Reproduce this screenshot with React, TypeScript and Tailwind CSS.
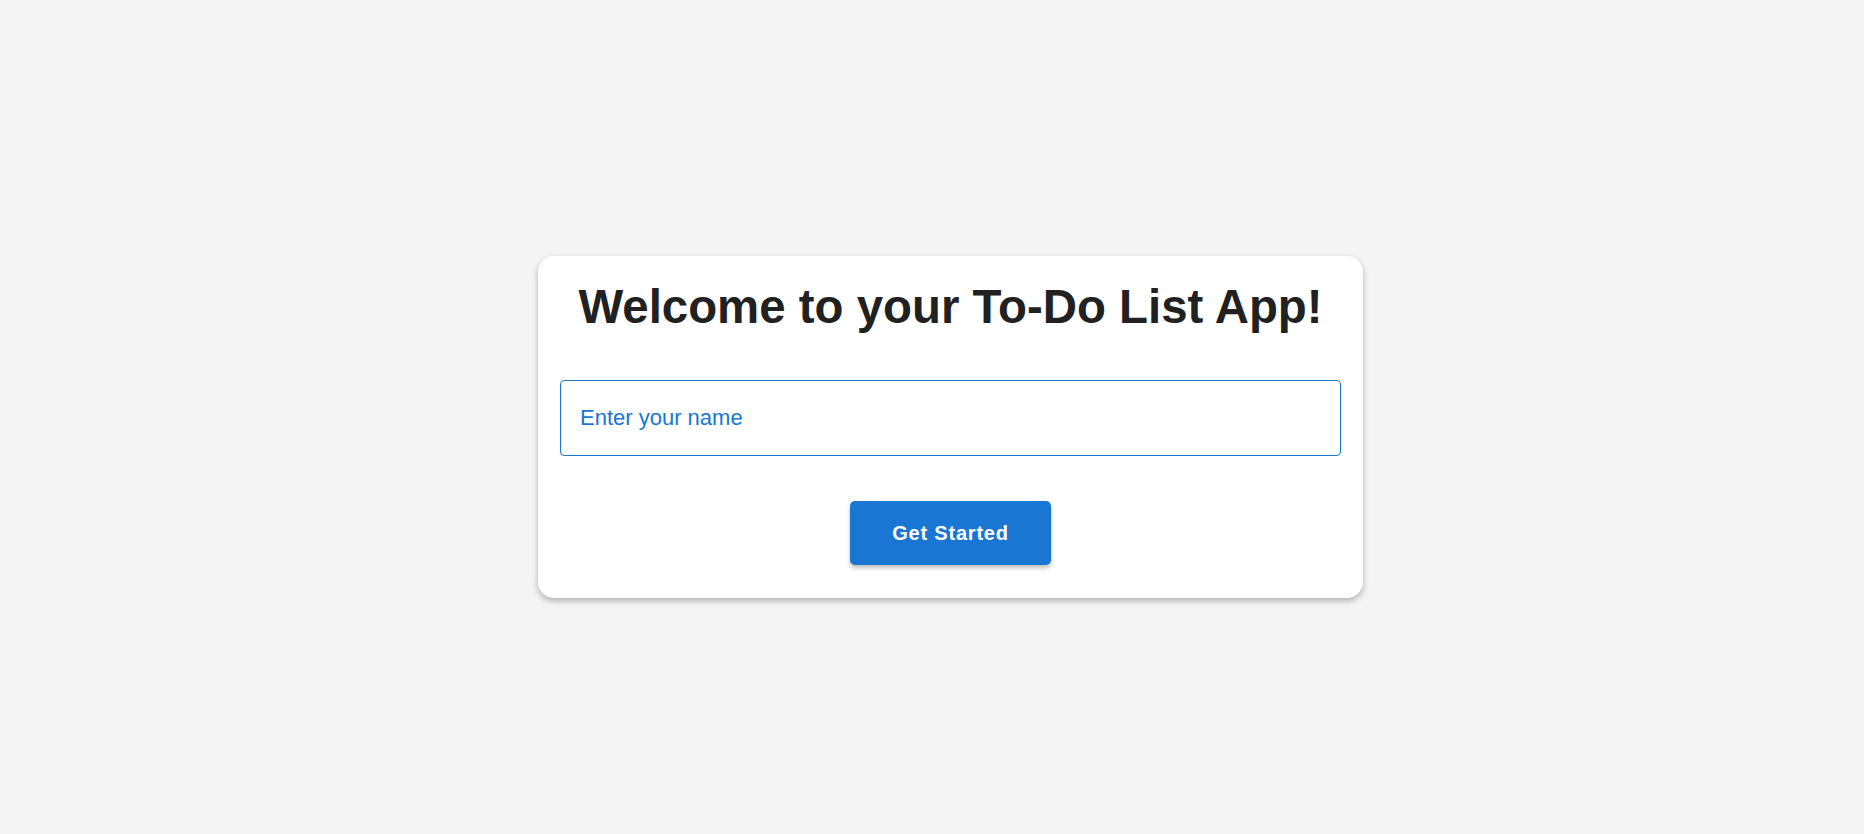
import React, { useState } from "react";

const App = () => {
  const [name, setName] = useState("");

  return (
    <div
      className="min-h-screen w-full bg-[#f4f4f4] flex items-center justify-center pl-[37px] pt-[20px]"
      style={{ fontFamily: '"Liberation Sans", Arial, sans-serif' }}
    >
      {/* Card */}
      <div className="w-[825px] bg-white rounded-[16px] shadow-[0_3px_6px_rgba(0,0,0,0.28)] px-[22px] pt-[22px] pb-[33px] flex flex-col items-center">
        <h1 className="text-[47.4px] leading-[57.6px] font-bold text-[#212121] text-center">
          Welcome to your To-Do List App!
        </h1>

        {/* Name input */}
        <input
          type="text"
          value={name}
          onChange={(e) => setName(e.target.value)}
          placeholder="Enter your name"
          className="mt-[45px] w-full h-[76px] rounded-[4px] border border-[#1976d2] px-[19px] text-[22px] text-[#212121] placeholder:text-[#1976d2] outline-none"
        />

        <button className="mt-[45px] w-[201px] h-[64px] rounded-[5px] bg-[#1976d2] text-white text-[20px] font-bold tracking-[0.8px] shadow-[0_3px_4px_rgba(0,0,0,0.25)]">
          Get Started
        </button>
      </div>
    </div>
  );
};

export default App;
